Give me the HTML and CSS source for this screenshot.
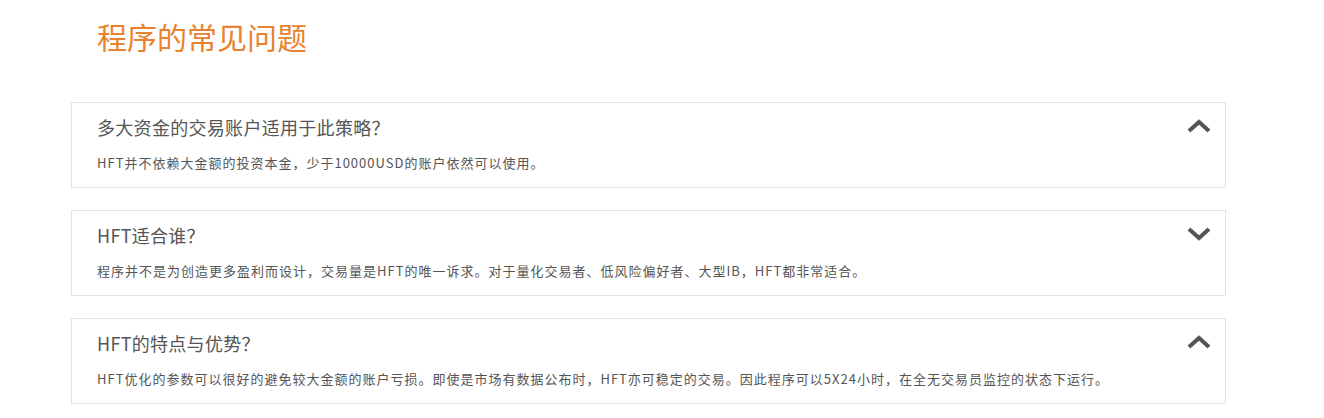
FILE: index.html
```html
<!DOCTYPE HTML>
<html lang="zh-CN">
	<head>
		<meta charset="utf-8"/>
		<title>程序的常见问题</title>
		<link rel="stylesheet" href="styles.css">
	</head>
	<body>
		<div class="faq">
			<h2 class="faq-title">程序的常见问题</h2>

			<div class="faq-item">
				<div class="faq-head">
					<span class="faq-q">多大资金的交易账户适用于此策略？</span>
					<svg class="chevron" width="24" height="14" viewBox="0 0 24 14"><path d="M2 12 L12 3 L22 12" fill="none" stroke="#555" stroke-width="4"/></svg>
				</div>
				<p class="faq-a">HFT并不依赖大金额的投资本金，少于10000USD的账户依然可以使用。</p>
			</div>

			<div class="faq-item">
				<div class="faq-head">
					<span class="faq-q">HFT适合谁？</span>
					<svg class="chevron" width="24" height="14" viewBox="0 0 24 14"><path d="M2 2 L12 11 L22 2" fill="none" stroke="#555" stroke-width="4"/></svg>
				</div>
				<p class="faq-a">程序并不是为创造更多盈利而设计，交易量是HFT的唯一诉求。对于量化交易者、低风险偏好者、大型IB，HFT都非常适合。</p>
			</div>

			<div class="faq-item">
				<div class="faq-head">
					<span class="faq-q">HFT的特点与优势？</span>
					<svg class="chevron" width="24" height="14" viewBox="0 0 24 14"><path d="M2 12 L12 3 L22 12" fill="none" stroke="#555" stroke-width="4"/></svg>
				</div>
				<p class="faq-a">HFT优化的参数可以很好的避免较大金额的账户亏损。即使是市场有数据公布时，HFT亦可稳定的交易。因此程序可以5X24小时，在全无交易员监控的状态下运行。</p>
			</div>
		</div>
	</body>
</html>
```

FILE: styles.css
```css
body {
	margin: 0;
	background: #fff;
	font-family: "Noto Sans CJK SC", "Noto Sans", sans-serif;
}
.faq {
	width: 1155px;
	margin-left: 71px;
}
.faq-title {
	margin: 0 0 0 26px;
	padding-top: 15px;
	height: 102px;
	box-sizing: border-box;
	font-size: 30px;
	line-height: 42px;
	font-weight: normal;
	color: #e8822e;
}
.faq-item {
	border: 1px solid #e2e2e2;
	height: 86px;
	box-sizing: border-box;
	padding: 11px 14px 14px 25px;
	margin-bottom: 22px;
}
.faq-head {
	display: flex;
	align-items: center;
	justify-content: space-between;
}
.faq-q {
	font-size: 18px;
	line-height: 26px;
	letter-spacing: 0.3px;
	color: #555;
}
.chevron {
	display: block;
	margin-top: -2px;
}
.faq-a {
	margin: 13px 0 0 0;
	font-size: 13px;
	line-height: 20px;
	letter-spacing: 1px;
	color: #555;
}
```
